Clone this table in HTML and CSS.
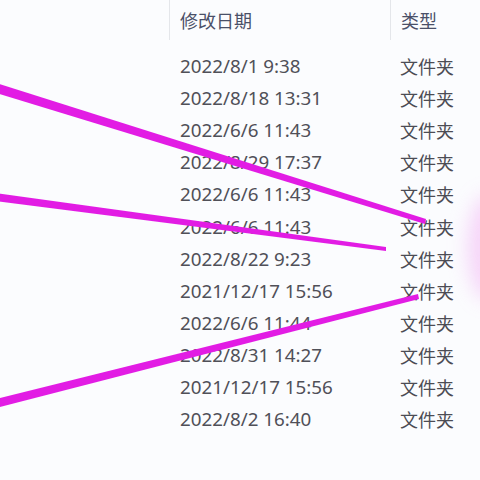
FILE: index.html
```html
<!DOCTYPE html>
<html lang="zh-CN">
<head>
<meta charset="utf-8">
<link rel="stylesheet" href="styles.css">
</head>
<body>
<div class="view">
  <div class="table">
    <div class="head">
      <div class="spacer"></div>
      <div class="hcell date">修改日期</div>
      <div class="hcell type">类型</div>
    </div>
    <div class="rows">
      <div class="row"><span class="date">2022/8/1 9:38</span><span class="type">文件夹</span></div>
      <div class="row"><span class="date">2022/8/18 13:31</span><span class="type">文件夹</span></div>
      <div class="row"><span class="date">2022/6/6 11:43</span><span class="type">文件夹</span></div>
      <div class="row"><span class="date">2022/8/29 17:37</span><span class="type">文件夹</span></div>
      <div class="row"><span class="date">2022/6/6 11:43</span><span class="type">文件夹</span></div>
      <div class="row"><span class="date">2022/6/6 11:43</span><span class="type">文件夹</span></div>
      <div class="row"><span class="date">2022/8/22 9:23</span><span class="type">文件夹</span></div>
      <div class="row"><span class="date">2021/12/17 15:56</span><span class="type">文件夹</span></div>
      <div class="row"><span class="date">2022/6/6 11:44</span><span class="type">文件夹</span></div>
      <div class="row"><span class="date">2022/8/31 14:27</span><span class="type">文件夹</span></div>
      <div class="row"><span class="date">2021/12/17 15:56</span><span class="type">文件夹</span></div>
      <div class="row"><span class="date">2022/8/2 16:40</span><span class="type">文件夹</span></div>
    </div>
  </div>
  <div class="glow"></div>
  <svg class="marks" width="480" height="480" viewBox="0 0 480 480">
    <defs>
      <filter id="soft" x="-5%" y="-20%" width="110%" height="140%">
        <feGaussianBlur stdDeviation="0.7"/>
      </filter>
    </defs>
    <g filter="url(#soft)" fill="#e21ee4">
      <polygon points="-4,83 -4,93 425,224 426,219"/>
      <polygon points="-4,193 -4,201 386,251 386,247"/>
      <polygon points="-4,399 -4,408 419,299 418,294"/>
    </g>
  </svg>
</div>
</body>
</html>
```
FILE: styles.css
```css
* { box-sizing: border-box; }
html, body {
  margin: 0;
  padding: 0;
  background: #fbfcfe;
}
body {
  font-family: "Noto Sans", "Noto Sans CJK SC", sans-serif;
  font-size: 18px;
  color: #4c4c54;
}
.view {
  position: relative;
  width: 480px;
  height: 480px;
  overflow: hidden;
}
.table {
  display: flex;
  flex-direction: column;
}
.head {
  display: grid;
  grid-template-columns: 169px 221px 1fr;
  height: 40px;
}
.hcell {
  border-left: 1px solid #e4e6ea;
  padding-left: 10px;
  display: flex;
  align-items: center;
  color: #4a5068;
  font-family: "Noto Sans CJK SC", sans-serif;
}
.rows {
  display: flex;
  flex-direction: column;
  padding-top: 10px;
}
.row {
  display: grid;
  grid-template-columns: 180px 220px 1fr;
  height: 32.1px;
  align-items: center;
}
.row .date {
  grid-column: 2;
  font-size: 18.8px;
  color: #505058;
}
.row .type {
  grid-column: 3;
  font-family: "Noto Sans CJK SC", sans-serif;
}
.glow {
  position: absolute;
  right: -30px;
  top: 195px;
  width: 42px;
  height: 105px;
  border-radius: 50%;
  background: rgba(236, 120, 236, 0.3);
  filter: blur(10px);
}
.marks {
  position: absolute;
  left: 0;
  top: 0;
}
```
